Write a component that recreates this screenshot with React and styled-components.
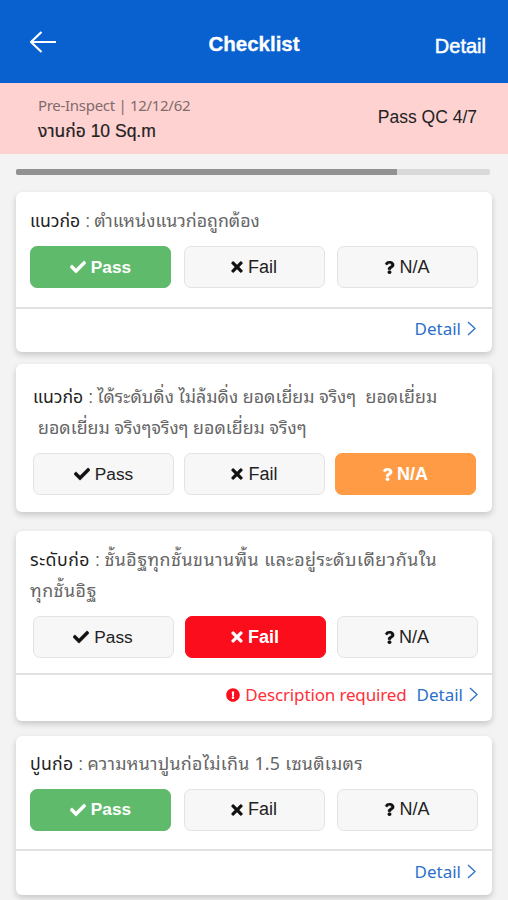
import React from "react";
import styled, { createGlobalStyle, css } from "styled-components";
import {
  FaCheck,
  FaTimes,
  FaQuestion,
  FaExclamationCircle,
} from "react-icons/fa";

const items = [
  {
    label: "แนวก่อ",
    lines: [{ text: "ตำแหน่งแนวก่อถูกต้อง" }],
    status: "pass",
    footer: 45,
    top: 0,
    padding: "12px 14px 0 14px",
    gap: "12.5px",
    height: 159.5,
  },
  {
    label: "แนวก่อ",
    lines: [
      { text: "ได้ระดับดิ่ง ไม่ล้มดิ่ง ยอดเยี่ยม จริงๆ \u00a0ยอดเยี่ยม" },
      { text: "ยอดเยี่ยม จริงๆจริงๆ ยอดเยี่ยม จริงๆ", indent: 5 },
    ],
    status: "na",
    top: 12.5,
    padding: "16px 16px 0 17px",
    gap: "10px",
    height: 148,
  },
  {
    label: "ระดับก่อ",
    lines: [
      { text: "ชั้นอิฐทุกชั้นขนานพื้น และอยู่ระดับเดียวกันใน" },
      { text: "ทุกชั้นอิฐ" },
    ],
    tracking: 0.5,
    status: "fail",
    warning: "Description required",
    footer: 48,
    top: 19,
    padding: "12px 14px 0 14px",
    gap: "11px",
    shift: 2.5,
    height: 190,
  },
  {
    label: "ปูนก่อ",
    lines: [{ text: "ความหนาปูนก่อไม่เกิน 1.5 เซนติเมตร" }],
    tracking: 0.25,
    status: "pass",
    footer: 46,
    top: 14.5,
    padding: "11px 14px 0 14px",
    gap: "12.5px",
    height: 159.5,
  },
];

const options = [
  { id: "pass", text: "Pass", Icon: FaCheck, size: 16 },
  { id: "fail", text: "Fail", Icon: FaTimes, size: 16 },
  { id: "na", text: "N/A", Icon: FaQuestion, size: 13 },
];

const Chevron = () => (
  <svg width="9" height="15" viewBox="0 0 9 15" fill="none">
    <path d="M1 1L8 7.5L1 14" stroke="currentColor" strokeWidth="1.3" />
  </svg>
);

const Item = ({ item }) => (
  <Card $top={item.top} $height={item.height}>
    <Body $padding={item.padding}>
      {item.lines.map((line, i) => (
        <Line key={line.text} $indent={line.indent} $tracking={item.tracking}>
          {i === 0 && (
            <>
              <Label>{item.label}</Label>
              <Colon>:</Colon>
            </>
          )}
          <Description>{line.text}</Description>
        </Line>
      ))}
      <Choices $gap={item.gap} $shift={item.shift}>
        {options.map(({ id, text, Icon, size }) => (
          <Choice
            key={id}
            $active={item.status === id && id}
            $tight={id !== "pass"}
          >
            <Icon size={size} />
            {text}
          </Choice>
        ))}
      </Choices>
    </Body>
    {item.footer && (
      <Footer $height={item.footer} $warning={!!item.warning}>
        {item.warning && (
          <Warning>
            <FaExclamationCircle size={14} />
            {item.warning}
          </Warning>
        )}
        <DetailLink>
          Detail
          <Chevron />
        </DetailLink>
      </Footer>
    )}
  </Card>
);

const App = () => (
  <Screen>
    <GlobalStyle />
    <Header>
      <Back aria-label="Back">
        <svg width="28" height="24" viewBox="0 0 28 24" fill="none">
          <path
            d="M12.5 2L2 12L12.5 22M2 12H27"
            stroke="#fff"
            strokeWidth="2.2"
            strokeLinejoin="round"
          />
        </svg>
      </Back>
      <Title>Checklist</Title>
      <HeaderLink>Detail</HeaderLink>
    </Header>
    <Banner>
      <div>
        <Stage>Pre-Inspect | 12/12/62</Stage>
        <Job>งานก่อ 10 Sq.m</Job>
      </div>
      <Score>Pass QC 4/7</Score>
    </Banner>
    <Track>
      <Progress />
    </Track>
    <List>
      {items.map((item, i) => (
        <Item key={i} item={item} />
      ))}
    </List>
  </Screen>
);

const GlobalStyle = createGlobalStyle`
  * {
    box-sizing: border-box;
  }

  body {
    margin: 0;
    background: #f3f3f3;
  }
`;

const Screen = styled.div`
  width: 508px;
  height: 900px;
  overflow: hidden;
  background: #f3f3f3;
  color: #222;
  font-family: "Liberation Sans", "Noto Sans Thai", sans-serif;
  white-space: nowrap;
`;

const Header = styled.header`
  height: 83px;
  padding: 0 22px 0 29px;
  display: grid;
  grid-template-columns: 1fr auto 1fr;
  align-items: center;
  background: #0961cf;
  color: #fff;
`;

const Back = styled.button`
  width: 28px;
  height: 24px;
  padding: 0;
  border: 0;
  background: none;
`;

const Title = styled.h1`
  margin: 5px 7px 0 0;
  font-size: 20.5px;
  font-weight: 700;
  -webkit-text-stroke: 0.3px;
`;

const HeaderLink = styled.span`
  justify-self: end;
  margin-top: 9px;
  font-size: 20px;
  -webkit-text-stroke: 0.5px;
`;

const Banner = styled.section`
  height: 71px;
  padding: 11px 31px 0 38px;
  display: flex;
  justify-content: space-between;
  background: #ffd2d2;
`;

const Stage = styled.div`
  font-family: "Noto Sans", sans-serif;
  font-size: 15px;
  line-height: 22px;
  letter-spacing: -0.3px;
  color: #806b6b;
`;

const Job = styled.div`
  font-size: 17.5px;
  line-height: 31px;
  color: #222;
  -webkit-text-stroke: 0.2px;
`;

const Score = styled.div`
  margin-top: 12px;
  font-size: 17.5px;
  line-height: 22px;
`;

const Track = styled.div`
  width: 474px;
  height: 6px;
  margin: 15px 0 0 16px;
  border-radius: 2px;
  background: #d9d9d9;
  overflow: hidden;
`;

const Progress = styled.div`
  width: 381px;
  height: 100%;
  background: #929292;
`;

const List = styled.main`
  padding: 17px 16px 0;
`;

const Card = styled.article`
  height: ${({ $height }) => $height}px;
  margin-top: ${({ $top }) => $top}px;
  display: flex;
  flex-direction: column;
  background: #fff;
  border-radius: 6px;
  box-shadow: 0 3px 6px rgba(0, 0, 0, 0.18);
`;

const Body = styled.div`
  flex: 1;
  padding: ${({ $padding }) => $padding};
`;

const Line = styled.div`
  height: 31px;
  padding-left: ${({ $indent = 0 }) => $indent}px;
  font-size: 17.7px;
  line-height: 31px;
  letter-spacing: ${({ $tracking = 0 }) => $tracking}px;
  color: #666;
`;

const Label = styled.span`
  color: #222;
`;

const Colon = styled.span`
  margin: 0 4px 0 5px;
`;

const Description = styled.span`
  font-family: "Noto Sans Thai Looped", "Noto Looped Thai", Sarabun, Loma,
    Garuda, "Liberation Sans", sans-serif;
  font-size: 17.8px;
`;

const Choices = styled.div`
  margin: 11px 0 0 ${({ $shift = 0 }) => $shift}px;
  display: grid;
  grid-template-columns: repeat(3, 141px);
  gap: ${({ $gap }) => $gap};
`;

const colors = { pass: "#5fba6c", fail: "#fc0d1b", na: "#ff9b45" };

const Choice = styled.button`
  height: 42px;
  padding: ${({ $tight }) => ($tight ? "0 2px 0 0" : "0")};
  display: flex;
  align-items: center;
  justify-content: center;
  gap: ${({ $tight }) => ($tight ? 3 : 5)}px;
  border: 1.5px solid #e3e3e3;
  border-radius: 7px;
  background: #f7f7f7;
  color: #222;
  font-family: inherit;
  font-size: ${({ $tight }) => ($tight ? 18 : 17.3)}px;

  svg {
    color: #111;
    stroke: currentColor;
    stroke-width: 14px;
  }

  ${({ $active }) =>
    $active &&
    css`
      border-color: ${colors[$active]};
      background: ${colors[$active]};
      color: #fff;
      font-weight: 700;

      svg {
        color: #fff;
      }
    `}
`;

const Footer = styled.footer`
  height: ${({ $height }) => $height}px;
  padding: ${({ $warning }) => ($warning ? "0 14px 7px 0" : "0 16px 4px 0")};
  display: flex;
  align-items: center;
  justify-content: flex-end;
  gap: 10px;
  border-top: 2px solid #e1e1e1;
  font-family: "Noto Sans", sans-serif;
  font-size: 17px;
`;

const Warning = styled.span`
  display: flex;
  align-items: center;
  gap: 5px;
  color: #ff3039;
  letter-spacing: -0.15px;

  svg {
    color: #fc0d1b;
  }
`;

const DetailLink = styled.a`
  display: flex;
  align-items: center;
  gap: 6px;
  color: #2c70ca;
`;

export default App;
